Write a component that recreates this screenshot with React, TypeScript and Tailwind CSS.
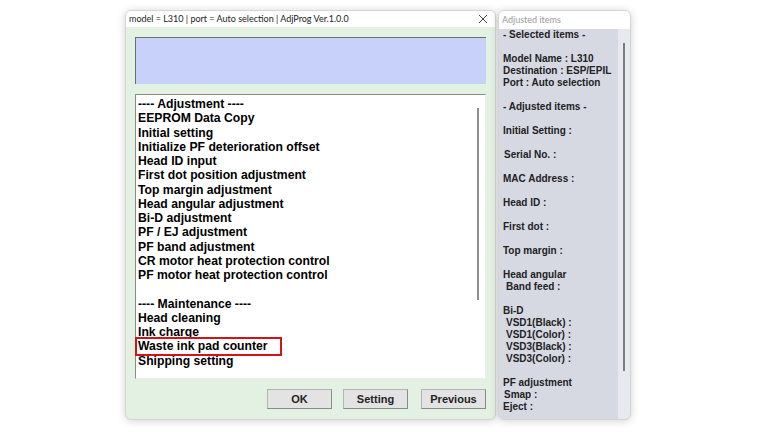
import React from "react";

const leftItems: string[] = [
  "---- Adjustment ----",
  "EEPROM Data Copy",
  "Initial setting",
  "Initialize PF deterioration offset",
  "Head ID input",
  "First dot position adjustment",
  "Top margin adjustment",
  "Head angular adjustment",
  "Bi-D adjustment",
  "PF / EJ adjustment",
  "PF band adjustment",
  "CR motor heat protection control",
  "PF motor heat protection control",
  "",
  "---- Maintenance ----",
  "Head cleaning",
  "Ink charge",
  "Waste ink pad counter",
  "Shipping setting",
];

type Line = { t: string; ind?: 1 | 3 };

const rightLines: Line[] = [
  { t: "- Selected items -" },
  { t: "" },
  { t: "Model Name : L310" },
  { t: "Destination : ESP/EPIL" },
  { t: "Port : Auto selection" },
  { t: "" },
  { t: "- Adjusted items -" },
  { t: "" },
  { t: "Initial Setting :" },
  { t: "" },
  { t: "Serial No. :", ind: 1 },
  { t: "" },
  { t: "MAC Address :" },
  { t: "" },
  { t: "Head ID :" },
  { t: "" },
  { t: "First dot :" },
  { t: "" },
  { t: "Top margin :" },
  { t: "" },
  { t: "Head angular" },
  { t: "Band feed :", ind: 3 },
  { t: "" },
  { t: "Bi-D" },
  { t: "VSD1(Black) :", ind: 3 },
  { t: "VSD1(Color) :", ind: 3 },
  { t: "VSD3(Black) :", ind: 3 },
  { t: "VSD3(Color) :", ind: 3 },
  { t: "" },
  { t: "PF adjustment" },
  { t: "Smap :", ind: 1 },
  { t: "Eject :" },
];

function Button({ label }: { label: string }) {
  return (
    <div className="w-[65px] h-[20px] flex items-center justify-center bg-[#e3e3e3] border border-[#b4b4b4] border-r-[#8a8a8a] border-b-[#8a8a8a] text-[11px] font-bold text-[#222]">
      {label}
    </div>
  );
}

export default function App() {
  return (
    <div
      className="w-[768px] h-[432px] bg-white flex items-start pl-[125px] pt-[10px] gap-[2px] overflow-hidden"
      style={{ fontFamily: '"Liberation Sans", Arial, sans-serif' }}
    >
      {/* Main window */}
      <div className="w-[371px] h-[410px] flex flex-col rounded-[6px] border border-[#d4d4d4] shadow-[0_1px_8px_rgba(0,0,0,0.18)] overflow-hidden bg-[#e3f1e2]">
        <div className="h-[19px] bg-white flex items-center justify-between pl-[3px] pr-[6px]">
          <span
            className="text-[9px] text-[#222] whitespace-nowrap"
            style={{ fontFamily: 'Lato, "Noto Sans", sans-serif' }}
          >
            model = L310 | port = Auto selection | AdjProg Ver.1.0.0
          </span>
          <svg width="10" height="10" viewBox="0 0 10 10" className="mr-[1px]">
            <path d="M1 1 L9 9 M9 1 L1 9" stroke="#444" strokeWidth="1" fill="none" />
          </svg>
        </div>
        <div className="flex-1 flex flex-col px-[9px] pt-[10px] pb-[10px]">
          <div className="h-[47px] bg-[#c8d1f9] border-t border-l border-[#6e6e6e] border-r-[#c8d1f9] border-b-[#e0e6ff]" />
          <div className="relative mt-[10px] h-[285px] bg-white border-t border-l border-[#8a8a8a] border-r border-r-[#ececec] border-b border-b-[#ececec] pl-[2px] pt-[2px]">
            {leftItems.map((t, i) => (
              <div key={i} className="h-[14.25px] leading-[14.25px] text-[12.2px] font-bold text-black whitespace-nowrap relative">
                {t}
                {t === "Waste ink pad counter" && (
                  <span className="absolute left-[-3px] top-[-2px] w-[147px] h-[19px] border-2 border-[#d5121a]" />
                )}
              </div>
            ))}
            <div className="absolute right-[6px] top-[13px] w-[2px] h-[192px] bg-[#8e8e8e]" />
          </div>
          <div className="mt-[10px] flex justify-end gap-[11px]">
            <Button label="OK" />
            <div className="flex gap-[13px]">
              <Button label="Setting" />
              <Button label="Previous" />
            </div>
          </div>
        </div>
      </div>

      {/* Right panel */}
      <div className="w-[133px] h-[410px] flex flex-col rounded-[6px] border border-[#d4d4d4] shadow-[0_1px_8px_rgba(0,0,0,0.18)] overflow-hidden bg-[#e7e9ee]">
        <div
          className="h-[18px] bg-white flex items-center pl-[3px] text-[9px] text-[#9a9a9a]"
          style={{ fontFamily: 'Lato, "Noto Sans", sans-serif' }}
        >
          Adjusted items
        </div>
        <div className="flex-1 flex">
          <div className="w-[119px] bg-[#d6d9e2] pl-[4px]">
            {rightLines.map((l, i) => (
              <div
                key={i}
                className={
                  "h-[12px] leading-[12px] text-[10px] font-bold text-[#222] whitespace-pre " +
                  (l.ind === 1 ? "pl-[1px]" : l.ind === 3 ? "pl-[3px]" : "")
                }
              >
                {l.t}
              </div>
            ))}
          </div>
          <div className="flex-1 flex justify-center">
            <div className="mt-[14px] w-[2px] h-[328px] bg-[#7c7c7c]" />
          </div>
        </div>
      </div>
    </div>
  );
}
